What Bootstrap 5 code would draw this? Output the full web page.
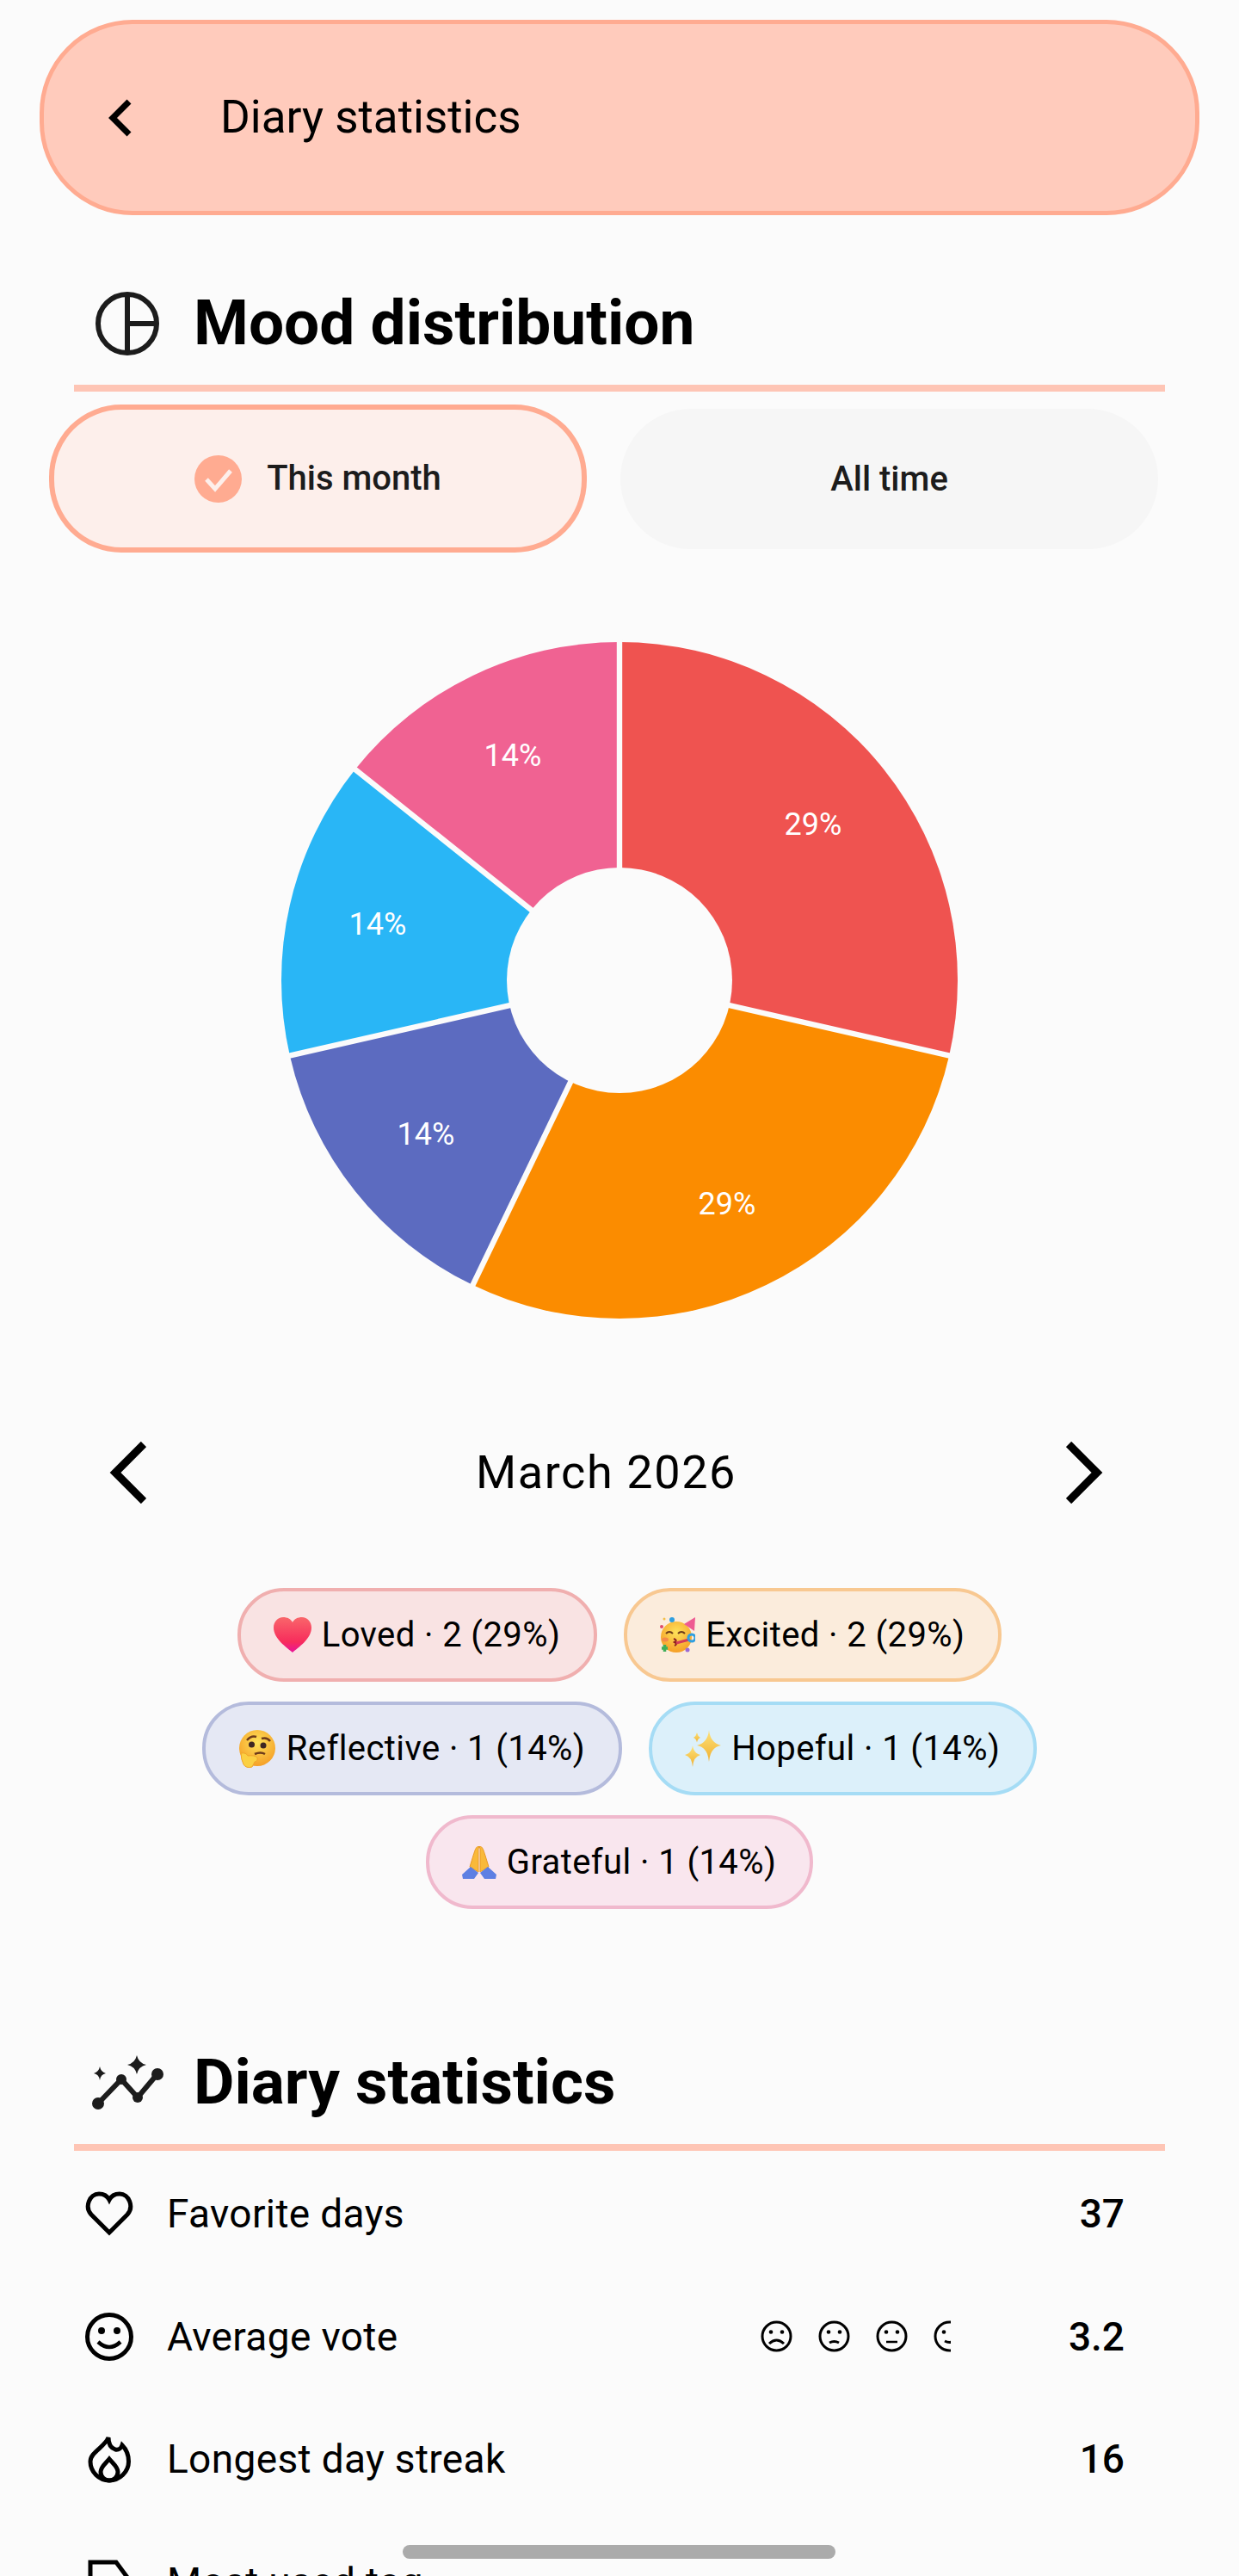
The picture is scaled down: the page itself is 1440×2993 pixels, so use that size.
<!DOCTYPE html>
<html lang="en">
<head>
  <meta charset="UTF-8">
  <title>Diary statistics</title>
  <meta name="viewport" content="width=device-width, initial-scale=1">
  <link href="https://cdn.jsdelivr.net/npm/bootstrap@5.3.3/dist/css/bootstrap.min.css" rel="stylesheet">
  <style>
    html, body { height: 2993px; overflow: hidden; }
    body {
      background: #fbfbfb;
      color: #000;
      font-family: Roboto, "Liberation Sans", sans-serif;
      position: relative;
    }
    .app-bar {
      margin: 23px 46px 0;
      height: 227px;
      background: #ffcbbc;
      border: 5px solid #ffab91;
      border-radius: 108px;
      padding-left: 74px;
      gap: 101px;
    }
    .app-bar-title { font-size: 53px; line-height: 1; }
    .section-head {
      margin: 0 86px;
      border-bottom: 8px solid #fec5b5;
      height: 143px;
      padding-bottom: 8px;
    }
    .section-head h2 { font-size: 73px; font-weight: 700; margin: 0; line-height: 1; }
    .head-icon { width: 139px; flex: none; }
    .mood-head { margin-top: 62px; }
    .mood-head .head-icon { padding-left: 25px; }
    .stats-head { margin-top: 138px; }
    .stats-head .head-icon { padding-left: 21px; }
    .range-row { margin: 15px 0 0 57px; gap: 39px; }
    .range-btn {
      flex: 0 0 625px;
      height: 172px;
      border-radius: 84px;
      font-size: 40px;
      font-weight: 500;
      gap: 29px;
      color: #1c1c1c;
    }
    .range-on { background: #fdefeb; border: 6px solid #ffab91; }
    .range-off { background: #f6f6f6; height: 163px; margin-top: 5px; }
    .pie-box { margin-top: 97px; }
    .pie-box text { font-family: Roboto, sans-serif; font-size: 36px; font-weight: 400; fill: #fff; text-anchor: middle; }
    .month-row { margin: 136px 158px 0 127px; height: 72px; }
    .month-label { font-size: 54px; letter-spacing: 1.6px; line-height: 1; }
    .chip-wrap { margin: 98px 86px 0; gap: 23px 31px; }
    .mood-chip {
      height: 109px;
      padding: 0 39px 0 38px;
      border: 4px solid;
      border-radius: 54px;
      font-size: 40px;
      letter-spacing: 0.4px;
      gap: 12px;
    }
    .chip-red { background: #f9e3e3; border-color: #f0afaf; }
    .chip-orange { background: #fbecdc; border-color: #f8c891; }
    .chip-indigo { background: #e5e8f4; border-color: #b4bbdc; }
    .chip-blue { background: #dcf0fa; border-color: #a5dcf5; }
    .chip-pink { background: #f9e6ee; border-color: #f0b9cd; }
    .stat-list { padding-top: 2px; }
    .stat-row { height: 142.6px; margin: 0 133px 0 99px; }
    .stat-icon { width: 56px; flex: none; margin-right: 39px; }
    .stat-label { font-size: 46px; letter-spacing: 0.35px; line-height: 1; }
    .stat-value { width: 100px; flex: none; text-align: right; font-size: 46px; font-weight: 500; line-height: 1; }
    .face-strip { width: 221px; overflow: hidden; gap: 30px; margin-right: 102px; }
    .face-strip svg { flex: none; }
    .home-bar {
      position: absolute;
      left: 468px;
      top: 2957px;
      width: 503px;
      height: 16px;
      border-radius: 8px;
      background: #ababab;
    }
  </style>
</head>
<body>

  <div class="app-bar d-flex align-items-center">
    <svg width="30" height="44" viewBox="0 0 30 44"><path d="M25 3 6 22l19 19" fill="none" stroke="#000" stroke-width="7"/></svg>
    <div class="app-bar-title">Diary statistics</div>
  </div>

  <div class="section-head mood-head d-flex align-items-center">
    <div class="head-icon d-flex">
      <svg width="74" height="74" viewBox="0 0 74 74" fill="none" stroke="#1c1c1c" stroke-width="6"><circle cx="37" cy="37" r="34"/><path d="M37 3v68M37 37h34"/></svg>
    </div>
    <h2>Mood distribution</h2>
  </div>

  <div class="range-row d-flex">
    <div class="range-btn range-on d-flex align-items-center justify-content-center">
      <svg width="55" height="55" viewBox="0 0 55 55"><circle cx="27.5" cy="27.5" r="27.5" fill="#ffab91"/><path d="M14 28l10 11 18-21" fill="none" stroke="#fdefeb" stroke-width="5"/></svg>
      <span>This month</span>
    </div>
    <div class="range-btn range-off d-flex align-items-center justify-content-center">All time</div>
  </div>

  <div class="pie-box d-flex justify-content-center">
    <svg width="800" height="800" viewBox="0 0 800 800">
      <path d="M400 400V7A393 393 0 0 1 783.15 487.45Z" fill="#ef5350"/>
      <path d="M400 400 783.15 487.45A393 393 0 0 1 229.48 754.08Z" fill="#fb8c00"/>
      <path d="M400 400 229.48 754.08A393 393 0 0 1 16.85 487.45Z" fill="#5c6bc0"/>
      <path d="M400 400 16.85 487.45A393 393 0 0 1 92.74 154.97Z" fill="#29b6f6"/>
      <path d="M400 400 92.74 154.97A393 393 0 0 1 400 7Z" fill="#f06292"/>
      <g stroke="#fbfbfb" stroke-width="6.4">
        <line x1="400" y1="400" x2="400" y2="3"/>
        <line x1="400" y1="400" x2="787.05" y2="488.34"/>
        <line x1="400" y1="400" x2="227.75" y2="757.68"/>
        <line x1="400" y1="400" x2="12.95" y2="488.34"/>
        <line x1="400" y1="400" x2="89.62" y2="152.48"/>
      </g>
      <circle cx="400" cy="400" r="131" fill="#fbfbfb"/>
      <text x="625" y="231">29%</text>
      <text x="525" y="672">29%</text>
      <text x="175" y="591">14%</text>
      <text x="119" y="347">14%</text>
      <text x="276" y="151">14%</text>
    </svg>
  </div>

  <div class="month-row d-flex align-items-center justify-content-between">
    <svg width="43" height="72" viewBox="0 0 43 72"><path d="M40 3 7 36l33 33" fill="none" stroke="#000" stroke-width="9"/></svg>
    <div class="month-label">March 2026</div>
    <svg width="43" height="72" viewBox="0 0 43 72"><path d="M3 3l33 33L3 69" fill="none" stroke="#000" stroke-width="9"/></svg>
  </div>

  <div class="chip-wrap d-flex flex-wrap justify-content-center">
    <div class="mood-chip chip-red d-flex align-items-center">
      <svg width="44" height="41" viewBox="0 0 44 41"><defs><linearGradient id="heartFill" x1="0" y1="0" x2="0" y2="1"><stop offset="0" stop-color="#f9666a"/><stop offset="0.7" stop-color="#f72c5c"/><stop offset="1" stop-color="#e8139a"/></linearGradient></defs><path d="M22 41C15 35 0 25 0 12 0 5 5 0 11 0c5 0 9 2 11 6 2-4 6-6 11-6 6 0 11 5 11 12 0 13-15 23-22 29Z" fill="url(#heartFill)"/></svg>
      <span>Loved · 2 (29%)</span>
    </div>
    <div class="mood-chip chip-orange d-flex align-items-center">
      <svg width="41" height="43" viewBox="0 0 41 43"><defs><radialGradient id="partyFill" cx="0.5" cy="0.35" r="0.7"><stop offset="0" stop-color="#fde25a"/><stop offset="1" stop-color="#f59a23"/></radialGradient></defs><circle cx="19" cy="24" r="18" fill="url(#partyFill)"/><path d="M28 9 41 1l-1 16Z" fill="#ee5a92"/><path d="M7 20q4-4 8 0M21 20q4-4 8 0" fill="none" stroke="#6d3a1a" stroke-width="2"/><ellipse cx="6" cy="27" rx="4" ry="2.500" fill="#f48a4a"/><path d="M16 26q5 2 1 4 4 2 0 4" fill="none" stroke="#8d2020" stroke-width="2"/><path d="M19 31l15-4" stroke="#d33c5a" stroke-width="3"/><circle cx="37" cy="25" r="4" fill="none" stroke="#2f9fe0" stroke-width="3"/><circle cx="14" cy="4" r="3" fill="#2f9fe0"/><circle cx="5" cy="3" r="1.500" fill="#f2c04a"/><circle cx="2" cy="12" r="2" fill="#e0486a"/><path d="M2 37h7M5.500 33v8" stroke="#3fae5a" stroke-width="3.500"/><circle cx="32" cy="39" r="2.500" fill="#9a6ad6"/></svg>
      <span>Excited · 2 (29%)</span>
    </div>
    <div class="mood-chip chip-indigo d-flex align-items-center">
      <svg width="44" height="44" viewBox="0 0 44 44"><defs><radialGradient id="thinkFill" cx="0.5" cy="0.35" r="0.7"><stop offset="0" stop-color="#fde25a"/><stop offset="1" stop-color="#f59a23"/></radialGradient></defs><circle cx="22" cy="21" r="21" fill="url(#thinkFill)"/><path d="M10 12q5-6 11-4M27 10q6-2 10 3" fill="none" stroke="#6d3a1a" stroke-width="2.500"/><circle cx="15.500" cy="17" r="3.500" fill="#3e2723"/><circle cx="29" cy="18" r="3.500" fill="#3e2723"/><path d="M19 28q7-3 12 0" fill="none" stroke="#6d3a1a" stroke-width="2.500"/><path d="M3 27q6-1 8 3 8-1 11 2 1 4-3 5l-3 6q-7 2-10-3Q3 34 3 27Z" fill="#fbd043" stroke="#f0a52a" stroke-width="1"/></svg>
      <span>Reflective · 1 (14%)</span>
    </div>
    <div class="mood-chip chip-blue d-flex align-items-center">
      <svg width="42" height="43" viewBox="0 0 42 43"><defs><linearGradient id="sparkFill" x1="0" y1="0" x2="0" y2="1"><stop offset="0" stop-color="#fde27a"/><stop offset="1" stop-color="#f0b030"/></linearGradient></defs><g fill="url(#sparkFill)"><path d="M28 0q1.500 15 14 18-12.500 2-14 19-1.500-17-14-19Q26.500 15 28 0Z"/><path d="M9 18q1 9 9 11-8 2-9 14-1-12-9-14 8-2 9-11Z"/><path d="M14 3q.8 4 4 6-3.200 1-4 5.500Q13.200 10 10 9q3.200-2 4-6Z"/></g></svg>
      <span>Hopeful · 1 (14%)</span>
    </div>
    <div class="mood-chip chip-pink d-flex align-items-center">
      <svg width="40" height="38" viewBox="0 0 40 38"><path d="M20 0c-4 0-5 5-7 11L9 24l10 6V3Zm0 0c4 0 5 5 7 11l4 13-10 6V3Z" fill="#f9b93a" stroke="#ea9a25" stroke-width="1"/><path d="M10 24 0 33l1 5h13l5-7Zm20 0 10 9-1 5H26l-5-7Z" fill="#5d7fe3"/></svg>
      <span>Grateful · 1 (14%)</span>
    </div>
  </div>

  <div class="section-head stats-head d-flex align-items-center">
    <div class="head-icon d-flex">
      <svg width="84" height="64" viewBox="0 0 84 64"><path d="M7 56 34 28l19 21 21-25" fill="none" stroke="#1c1c1c" stroke-width="6"/><g fill="#1c1c1c"><circle cx="7" cy="56" r="7"/><circle cx="34" cy="28" r="6"/><circle cx="53" cy="49" r="6"/><circle cx="76" cy="22" r="7"/><path d="M52 0q2 9 11 11-9 2-11 11-2-9-11-11 9-2 11-11Z"/><path d="M9 13q1 6 7 8-6 1-7 8-1-7-7-8 6-2 7-8Z"/></g></svg>
    </div>
    <h2>Diary statistics</h2>
  </div>

  <div class="stat-list">
    <div class="stat-row d-flex align-items-center">
      <svg class="stat-icon" height="52" viewBox="0 0 56 52"><path d="M28 48 7 27C-1 18 5 3 16 3c6 0 10 3 12 7 2-4 6-7 12-7 11 0 17 15 9 24Z" fill="none" stroke="#000" stroke-width="5"/></svg>
      <div class="stat-label me-auto">Favorite days</div>
      <div class="stat-value">37</div>
    </div>
    <div class="stat-row d-flex align-items-center">
      <svg class="stat-icon" height="56" viewBox="0 0 56 56"><circle cx="28" cy="28" r="25.500" fill="none" stroke="#000" stroke-width="5"/><circle cx="19" cy="21" r="4" fill="#000"/><circle cx="37" cy="21" r="4" fill="#000"/><path d="M15 34q13 12 26 0" fill="none" stroke="#000" stroke-width="4.500"/></svg>
      <div class="stat-label me-auto">Average vote</div>
      <div class="face-strip d-flex">
        <svg width="37" height="37" viewBox="0 0 37 37"><circle cx="18.500" cy="18.500" r="16.500" fill="none" stroke="#000" stroke-width="3"/><circle cx="12" cy="13.500" r="2.300"/><circle cx="25" cy="13.500" r="2.300"/><path d="M10 27q8.500-8 17 0" fill="none" stroke="#000" stroke-width="3"/></svg>
        <svg width="37" height="37" viewBox="0 0 37 37"><circle cx="18.500" cy="18.500" r="16.500" fill="none" stroke="#000" stroke-width="3"/><circle cx="12" cy="13.500" r="2.300"/><circle cx="25" cy="13.500" r="2.300"/><path d="M13 26q5.500-3 11 0" fill="none" stroke="#000" stroke-width="3"/></svg>
        <svg width="37" height="37" viewBox="0 0 37 37"><circle cx="18.500" cy="18.500" r="16.500" fill="none" stroke="#000" stroke-width="3"/><circle cx="12" cy="13.500" r="2.300"/><circle cx="25" cy="13.500" r="2.300"/><path d="M12 25h13" fill="none" stroke="#000" stroke-width="2.500"/></svg>
        <svg width="37" height="37" viewBox="0 0 37 37"><circle cx="18.500" cy="18.500" r="16.500" fill="none" stroke="#000" stroke-width="3"/><circle cx="12" cy="13.500" r="2.300"/><circle cx="25" cy="13.500" r="2.300"/><path d="M13 24q5.500 3 11 0" fill="none" stroke="#000" stroke-width="3"/></svg>
      </div>
      <div class="stat-value">3.2</div>
    </div>
    <div class="stat-row d-flex align-items-center">
      <svg class="stat-icon" height="56" viewBox="0 0 56 56"><path d="M27 3C27 9 29 15 35 17 39 18 42 15 43 12 48 17 50.500 23 50.500 31 50.500 43 40 53 28 53 16 53 6 43 6 31 6 20 23 14 27 3Z" fill="none" stroke="#000" stroke-width="5"/><path d="M28 28C32 33 38 37 38 43 38 49 33 53 28 53 23 53 18 49 18 43 18 37 24 33 28 28Z" fill="none" stroke="#000" stroke-width="5"/></svg>
      <div class="stat-label me-auto">Longest day streak</div>
      <div class="stat-value">16</div>
    </div>
    <div class="stat-row d-flex align-items-center">
      <svg class="stat-icon" height="52" viewBox="0 0 56 52"><path d="M6 3h30l17 23-17 23H6Z" fill="none" stroke="#000" stroke-width="5"/></svg>
      <div class="stat-label me-auto">Most used tag</div>
    </div>
  </div>

  <div class="home-bar"></div>

  <script src="https://cdn.jsdelivr.net/npm/bootstrap@5.3.3/dist/js/bootstrap.bundle.min.js"></script>
</body>
</html>
